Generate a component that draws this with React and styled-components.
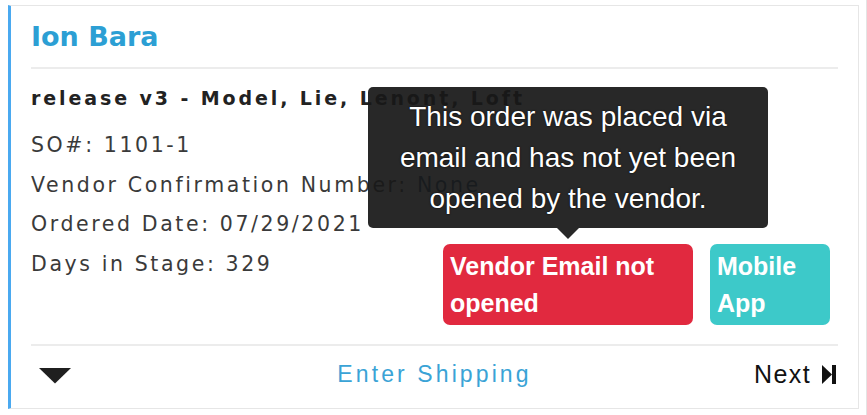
import React from "react";
import styled, { createGlobalStyle } from "styled-components";

const Global = createGlobalStyle`
  html, body { margin: 0; padding: 0; background: #ffffff; }
  body { font-family: "DejaVu Sans", sans-serif; }
  * { box-sizing: border-box; }
`;

const Frame = styled.div`
  width: 867px;
  height: 415px;
  padding: 5px 8px 0 8px;
  border-right: 1px solid #e4e4e4;
`;

const Card = styled.div`
  width: 851px;
  height: 404px;
  border: 1px solid #e6e6e6;
  border-left: 3px solid #4aa9f0;
  display: flex;
  flex-direction: column;
  padding: 0 20px;
`;

const Name = styled.h2`
  margin: 15px 0 14px;
  font-family: "DejaVu Sans", sans-serif;
  font-weight: 700;
  font-size: 27px;
  line-height: 32px;
  color: #2c9fd4;
`;

const Divider = styled.div`
  height: 2px;
  background: #ececec;
  margin-top: ${(p) => p.$top || 0}px;
`;

const Body = styled.div`
  display: flex;
  flex-direction: column;
`;

const Title = styled.div`
  margin-top: 14px;
  font-weight: 700;
  font-size: 19px;
  line-height: 30px;
  letter-spacing: 2.9px;
  color: #222;
  white-space: nowrap;
`;

const Row = styled.div`
  display: flex;
  align-items: flex-start;
  margin-top: 13px;
`;

const Info = styled.div`
  flex: 1;
  min-width: 0;
  display: flex;
  flex-direction: column;
`;

const Line = styled.div`
  font-size: 20.5px;
  line-height: 39.5px;
  letter-spacing: 2.6px;
  color: #3a3a3a;
  white-space: nowrap;
`;

const Link = styled.span`
  color: #24506f;
`;

const Badges = styled.div`
  flex-shrink: 0;
  display: flex;
  gap: 17px;
  margin-top: 118px;
  margin-right: 8px;
`;

const BadgeWrap = styled.div`
  position: relative;
`;

const Badge = styled.div`
  width: ${(p) => p.$w}px;
  height: 81px;
  border-radius: 7px;
  background: ${(p) => p.$bg};
  color: #fff;
  font-family: "Liberation Sans", Arial, sans-serif;
  font-weight: 700;
  font-size: 25px;
  line-height: 37px;
  padding: 4px 5px 0 7px;
`;

const Tooltip = styled.div`
  position: absolute;
  left: 50%;
  bottom: calc(100% + 16px);
  transform: translateX(-50%);
  width: 400px;
  padding: 9px 12px 9px;
  border-radius: 5px;
  background: rgba(24, 24, 24, 0.93);
  color: #fff;
  font-family: "Liberation Sans", Arial, sans-serif;
  font-size: 28px;
  line-height: 41px;
  text-align: center;
  text-shadow: 0 0 2px rgba(0, 0, 0, 0.9);

  &::after {
    content: "";
    position: absolute;
    left: 50%;
    top: 100%;
    transform: translateX(-50%);
    border-left: 11px solid transparent;
    border-right: 11px solid transparent;
    border-top: 11px solid rgba(24, 24, 24, 0.93);
  }
`;

const Footer = styled.div`
  display: grid;
  grid-template-columns: 1fr auto 1fr;
  align-items: center;
  height: 30px;
  margin-top: 13px;
`;

const Caret = styled.svg`
  margin-left: 7px;
  margin-top: 3px;
`;

const Action = styled.div`
  font-family: "Liberation Sans", Arial, sans-serif;
  font-size: 23px;
  letter-spacing: 3.1px;
  color: #3aa3d6;
`;

const Next = styled.div`
  justify-self: end;
  display: flex;
  align-items: center;
  gap: 11px;
  margin-right: 2px;
  font-family: "Liberation Sans", Arial, sans-serif;
  font-size: 25px;
  letter-spacing: 1.4px;
  color: #111;
`;

export default function App() {
  return (
    <>
      <Global />
      <Frame>
        <Card>
          <Name>Ion Bara</Name>
          <Divider />
          <Body>
            <Title>release v3 - Model, Lie, Lenont, Loft</Title>
            <Row>
              <Info>
                <Line>SO#: 1101-1</Line>
                <Line>
                  Vendor Confirmation Number: <Link>None</Link>
                </Line>
                <Line>Ordered Date: 07/29/2021</Line>
                <Line>Days in Stage: 329</Line>
              </Info>
              <Badges>
                <BadgeWrap>
                  <Tooltip>
                    This order was placed via email and has not yet been opened by the vendor.
                  </Tooltip>
                  <Badge $w={250} $bg="#e1293f">
                    Vendor Email not opened
                  </Badge>
                </BadgeWrap>
                <Badge $w={120} $bg="#3dc9c9">
                  Mobile App
                </Badge>
              </Badges>
            </Row>
          </Body>
          <Divider $top={19} />
          <Footer>
            <Caret width="34" height="17" viewBox="0 0 34 17">
              <path d="M1 1 L33 1 L17 16.5 Z" fill="#1f1f1f" />
            </Caret>
            <Action>Enter Shipping</Action>
            <Next>
              Next
              <svg width="14" height="19" viewBox="0 0 14 19">
                <path d="M0 0 L10 9.5 L0 19 Z" fill="#111" />
                <rect x="10" y="0" width="4" height="19" fill="#111" />
              </svg>
            </Next>
          </Footer>
        </Card>
      </Frame>
    </>
  );
}
